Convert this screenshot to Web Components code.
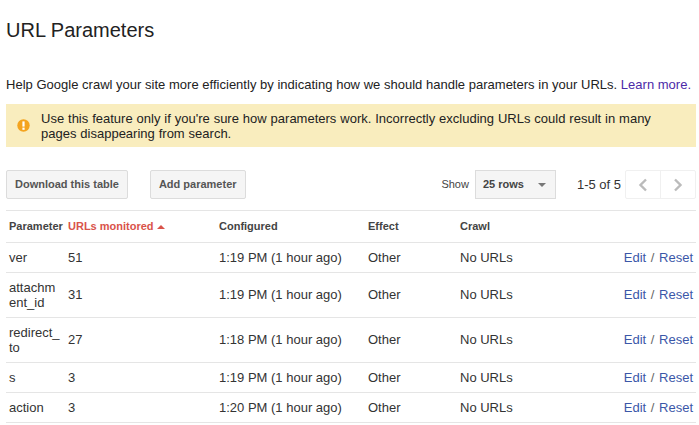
<!DOCTYPE html>
<html>
<head>
<meta charset="utf-8">
<style>
  html, body { margin: 0; background: #fff; }
  body { font: 13px/15px "Liberation Sans", Arial, sans-serif; color: #222; overflow: hidden; }
</style>
</head>
<body>
<url-parameters-page></url-parameters-page>
<script>
const html = (strings, ...expressions) => {
  const template = document.createElement('template')
  template.innerHTML = strings.reduce((result, str, i) => result + str + (expressions[i] ?? ''), '')
  return template
}

const define = (name, template) => {
  customElements.define(name, class extends HTMLElement {
    constructor() {
      super()
      this.attachShadow({ mode: 'open' })
      this.shadowRoot.appendChild(template.content.cloneNode(true))
    }
  })
}

define('warning-box', html`
  <style>
    :host {
      display: flex;
      align-items: center;
      height: 43px;
      background: #f9edbe;
      padding-left: 11px;
      color: #222;
      word-spacing: 0.3px;
    }
    svg { flex: none; margin-right: 11px; }
    div { width: 620px; }
  </style>
  <svg width="13" height="13" viewBox="0 0 13 13">
    <circle cx="6.5" cy="6.5" r="6.2" fill="#f4a41f"/>
    <rect x="5.4" y="2.4" width="2.2" height="5.2" fill="#fff"/>
    <rect x="5.4" y="8.6" width="2.2" height="2.2" fill="#fff"/>
  </svg>
  <div><slot></slot></div>
`)

define('action-button', html`
  <style>
    :host {
      display: flex;
      align-items: center;
      box-sizing: border-box;
      height: 29px;
      padding: 0 8px;
      background: #f5f5f5;
      border: 1px solid #dcdcdc;
      border-radius: 2px;
      font-size: 11px;
      font-weight: bold;
      color: #555;
    }
  </style>
  <slot></slot>
`)

define('rows-select', html`
  <style>
    :host {
      display: flex;
      align-items: center;
      justify-content: space-between;
      box-sizing: border-box;
      width: 81px;
      height: 29px;
      padding: 0 9px 0 7px;
      background: #f5f5f5;
      border: 1px solid #dcdcdc;
      font-size: 11px;
      font-weight: bold;
      color: #444;
    }
    i { border: 4px solid transparent; border-top-color: #777; border-bottom: 0; }
  </style>
  <slot></slot><i></i>
`)

define('pager-buttons', html`
  <style>
    :host {
      display: flex;
      box-sizing: border-box;
      width: 71px;
      height: 29px;
      border: 1px solid #f0f0f0;
      border-radius: 2px;
    }
    span { flex: 1; display: flex; align-items: center; justify-content: center; }
    span + span { border-left: 1px solid #f0f0f0; }
  </style>
  <span><svg width="10" height="14" viewBox="0 0 10 14"><path d="M8 1.5 2.5 7 8 12.5" fill="none" stroke="#bbb" stroke-width="2.4"/></svg></span>
  <span><svg width="10" height="14" viewBox="0 0 10 14"><path d="M2 1.5 7.5 7 2 12.5" fill="none" stroke="#bbb" stroke-width="2.4"/></svg></span>
`)

define('table-toolbar', html`
  <style>
    :host {
      display: flex;
      align-items: center;
      margin-top: 23px;
      height: 29px;
    }
    ::slotted(action-button) { margin-right: 22px; }
    .show { margin-left: auto; font-size: 11px; color: #444; margin-right: 6px; }
    .count { margin: 0 4px 0 21px; color: #333; }
  </style>
  <slot name="buttons"></slot>
  <span class="show">Show</span>
  <slot name="select"></slot>
  <span class="count">1-5 of 5</span>
  <slot name="pager"></slot>
`)

const columns = '59px 151px 149px 92px 1fr auto'

define('table-head', html`
  <style>
    :host {
      display: grid;
      grid-template-columns: ${columns};
      align-items: center;
      height: 31px;
      padding: 0 3px;
      border-top: 1px solid #e5e5e5;
      border-bottom: 1px solid #e5e5e5;
      margin-top: 11px;
      font-size: 11px;
      font-weight: bold;
      color: #444;
    }
    .sorted { color: #d9534a; display: flex; align-items: center; gap: 3px; }
    .sorted i { border: 4px solid transparent; border-bottom-color: #d9534a; border-top: 0; }
  </style>
  <span>Parameter</span>
  <span class="sorted">URLs monitored <i></i></span>
  <span>Configured</span>
  <span>Effect</span>
  <span>Crawl</span>
`)

define('param-row', html`
  <style>
    :host {
      display: grid;
      grid-template-columns: ${columns};
      align-items: center;
      padding: 7px 3px;
      border-bottom: 1px solid #e5e5e5;
      color: #333;
    }
    /* two-line names: the other cells sit a pixel above true centre */
    :host([tall]) .cell { margin-bottom: 1px; }
    .name { width: 52px; overflow-wrap: anywhere; }
    .links { color: #666; word-spacing: 1px; }
    .links a { color: #3b57a8; text-decoration: none; }
  </style>
  <div class="name"><slot name="name"></slot></div>
  <div class="cell"><slot name="urls"></slot></div>
  <div class="cell"><slot name="configured"></slot></div>
  <div class="cell">Other</div>
  <div class="cell">No URLs</div>
  <div class="cell links"><a href="#">Edit</a> / <a href="#">Reset</a></div>
`)

define('url-parameters-page', html`
  <style>
    :host {
      display: block;
      padding: 0 3px 0 6px;
    }
    h1 { margin: 0; padding-top: 18px; font: 20px/24px "Liberation Sans", Arial, sans-serif; color: #222; }
    p { margin: 35px 0 12px; white-space: nowrap; color: #222; letter-spacing: 0.015px; }
    p a { color: #4b2aa8; text-decoration: none; }
  </style>
  <h1>URL Parameters</h1>
  <p>Help Google crawl your site more efficiently by indicating how we should handle parameters in your URLs. <a href="#">Learn more.</a></p>
  <warning-box>Use this feature only if you're sure how parameters work. Incorrectly excluding URLs could result in many pages disappearing from search.</warning-box>
  <table-toolbar>
    <action-button slot="buttons">Download this table</action-button>
    <action-button slot="buttons">Add parameter</action-button>
    <rows-select slot="select">25 rows</rows-select>
    <pager-buttons slot="pager"></pager-buttons>
  </table-toolbar>
  <table-head></table-head>
  <param-row><span slot="name">ver</span><span slot="urls">51</span><span slot="configured">1:19 PM (1 hour ago)</span></param-row>
  <param-row tall><span slot="name">attachm ent_id</span><span slot="urls">31</span><span slot="configured">1:19 PM (1 hour ago)</span></param-row>
  <param-row tall><span slot="name">redirect_ to</span><span slot="urls">27</span><span slot="configured">1:18 PM (1 hour ago)</span></param-row>
  <param-row><span slot="name">s</span><span slot="urls">3</span><span slot="configured">1:19 PM (1 hour ago)</span></param-row>
  <param-row><span slot="name">action</span><span slot="urls">3</span><span slot="configured">1:20 PM (1 hour ago)</span></param-row>
`)
</script>
</body>
</html>
